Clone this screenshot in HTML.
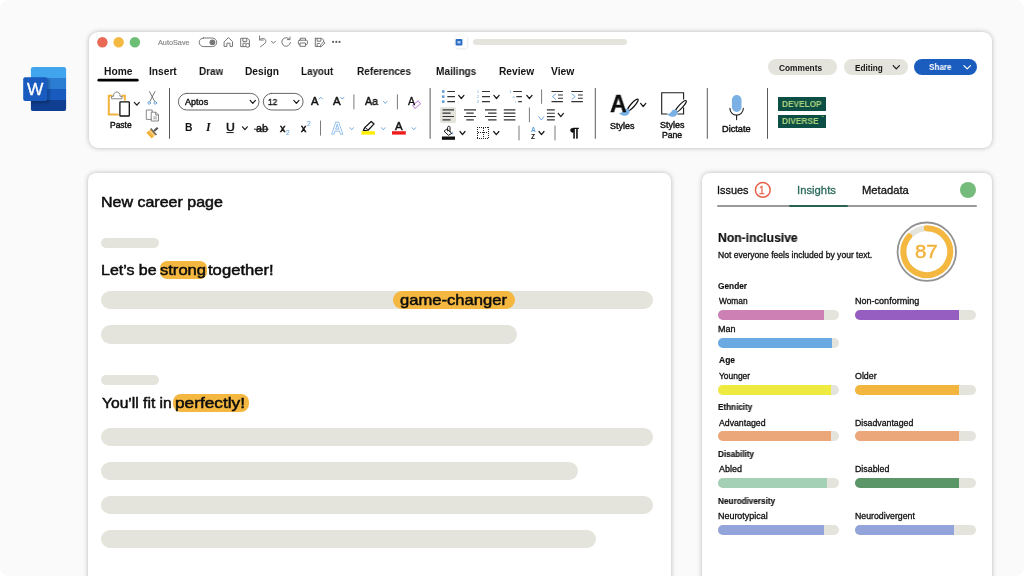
<!DOCTYPE html>
<html lang="en"><head><meta charset="utf-8"><title>Word add-in – Develop Diverse</title>
<style>
html,body{margin:0;padding:0;background:#fff;}
body{width:1024px;height:576px;overflow:hidden;position:relative;font-family:"Liberation Sans",sans-serif;}
#bg{position:absolute;left:0;top:0;width:1024px;height:576px;background:#fafafa;border-radius:9px;overflow:hidden;}
.card{position:absolute;background:#fff;box-shadow:0 0 5px rgba(0,0,0,.27);}
#toolbar{left:88.5px;top:31.5px;width:903.7px;height:116px;border-radius:9px;}
#doc{left:88px;top:172.9px;width:582.8px;height:420px;border-radius:8px;}
#panel{left:702.2px;top:172.9px;width:289.8px;height:420px;border-radius:8px;}
.t{position:absolute;white-space:nowrap;line-height:1;transform-origin:0 50%;will-change:transform;}
.ph{position:absolute;background:#e4e4dc;border-radius:10px;}
.hl{position:absolute;background:#f4b840;}
.bar{position:absolute;width:121px;height:10px;border-radius:5px;background:#e4e4dc;overflow:hidden;}
.bar i{display:block;height:100%;}
.pill{position:absolute;border-radius:9px;background:#e4e4dc;}
svg#ic{position:absolute;left:0;top:0;will-change:transform;}
</style></head><body>
<div id="bg">
<div class="card" id="toolbar"></div>
<div class="card" id="doc"></div>
<div class="card" id="panel"></div>

<!-- toolbar buttons -->
<div class="pill" style="left:767.5px;top:59px;width:69.4px;height:16.3px"></div>
<div class="pill" style="left:843.8px;top:58.8px;width:63.8px;height:16.4px"></div>
<div class="pill" style="left:913.7px;top:58.7px;width:63.7px;height:16.5px;background:#1b5cbf"></div>
<div class="pill" style="left:473px;top:39px;width:154.3px;height:6.1px;border-radius:3px"></div>
<div style="position:absolute;left:440.3px;top:106.6px;width:16.2px;height:16.2px;border-radius:2px;background:#e4e4dc"></div>
<div style="position:absolute;left:778.1px;top:97.1px;width:48.4px;height:13.8px;background:#0e4f45"></div>
<div style="position:absolute;left:778.1px;top:114.7px;width:48.4px;height:13.7px;background:#0e4f45"></div>

<!-- document placeholders / highlights -->
<div class="ph" style="left:101px;top:238.4px;width:58px;height:9.6px"></div>
<div class="ph" style="left:101px;top:291.1px;width:551.5px;height:18.2px"></div>
<div class="ph" style="left:101px;top:325.4px;width:416px;height:18.2px"></div>
<div class="ph" style="left:101px;top:375.2px;width:58px;height:9.5px"></div>
<div class="ph" style="left:101px;top:427.8px;width:551.5px;height:18.2px"></div>
<div class="ph" style="left:101px;top:461.9px;width:476.5px;height:18.2px"></div>
<div class="ph" style="left:101px;top:496.0px;width:551.5px;height:18.2px"></div>
<div class="ph" style="left:101px;top:530.0px;width:495.4px;height:18.3px"></div>

<div class="hl" style="left:159.5px;top:260.6px;width:47.5px;height:18px;border-radius:7px"></div>
<div class="hl" style="left:393.2px;top:291.1px;width:121.6px;height:18.2px;border-radius:9px"></div>
<div class="hl" style="left:173px;top:393.5px;width:76.2px;height:18.5px;border-radius:8px"></div>

<!-- panel bars -->
<div style="position:absolute;left:717.2px;top:205.3px;width:260px;height:2px;background:#9a9a9a;border-radius:1px"></div>
<div style="position:absolute;left:789.4px;top:205.2px;width:58.7px;height:2.3px;background:#2a6354;border-radius:1px"></div>
<div style="position:absolute;left:959.7px;top:181.5px;width:16.2px;height:16.2px;border-radius:50%;background:#74bb7c"></div>
<div class="bar" style="left:718.2px;top:310.0px"><i style="width:106.3px;background:#cc80b4"></i></div>
<div class="bar" style="left:854.8px;top:310.0px"><i style="width:103.9px;background:#965ec1"></i></div>
<div class="bar" style="left:718.2px;top:337.9px"><i style="width:113.6px;background:#6aa9e2"></i></div>
<div class="bar" style="left:718.2px;top:384.7px"><i style="width:112.8px;background:#eeea3f"></i></div>
<div class="bar" style="left:854.8px;top:384.7px"><i style="width:103.9px;background:#f2b63f"></i></div>
<div class="bar" style="left:718.2px;top:431.4px"><i style="width:112.8px;background:#eba67a"></i></div>
<div class="bar" style="left:854.8px;top:431.4px"><i style="width:103.9px;background:#eba67a"></i></div>
<div class="bar" style="left:718.2px;top:478.2px"><i style="width:108.4px;background:#a4d0b5"></i></div>
<div class="bar" style="left:854.8px;top:478.2px"><i style="width:103.9px;background:#5a9668"></i></div>
<div class="bar" style="left:718.2px;top:525.0px"><i style="width:106.3px;background:#92a4d9"></i></div>
<div class="bar" style="left:854.8px;top:525.0px"><i style="width:98.9px;background:#92a4d9"></i></div>

<svg id="ic" width="1024" height="576" viewBox="0 0 1024 576" fill="none" stroke-linecap="round" stroke-linejoin="round" font-family="Liberation Sans, sans-serif">
<defs>
<clipPath id="wclip"><rect x="30.9" y="67" width="35.2" height="44.1" rx="2.2"/></clipPath>
<filter id="sh" x="-30%" y="-30%" width="160%" height="160%"><feGaussianBlur stdDeviation="1.1"/></filter>
</defs>
<!-- Word logo -->
<g clip-path="url(#wclip)" stroke="none">
<rect x="30" y="66" width="37" height="12.1" fill="#41a5ee"/>
<rect x="30" y="78" width="37" height="11.1" fill="#2b7cd3"/>
<rect x="30" y="89" width="37" height="11.1" fill="#185abd"/>
<rect x="30" y="100" width="37" height="12" fill="#103f91"/>
<rect x="24" y="78.6" width="25.5" height="24.6" rx="2" fill="#000" opacity=".22" filter="url(#sh)"/>
</g>
<rect x="23.2" y="77.3" width="24" height="23.6" rx="2" fill="#185abd" stroke="none"/>
<text x="27.1" y="95.2" font-size="17.2" fill="#fff" stroke="#fff" stroke-width="0.35" textLength="16.4" lengthAdjust="spacingAndGlyphs">W</text>

<!-- traffic lights -->
<g stroke="none">
<circle cx="102.4" cy="42.25" r="5.2" fill="#e96a55"/>
<circle cx="118.65" cy="42.25" r="5.2" fill="#f4b940"/>
<circle cx="134.9" cy="42.25" r="5.2" fill="#6cbf75"/>
</g>

<!-- title bar icons -->
<g stroke="#707070" stroke-width="0.95">
<rect x="199.2" y="38" width="17.5" height="8.6" rx="4.3" fill="#fff"/>
<circle cx="212.4" cy="42.3" r="2.9" fill="#767676" stroke="none"/>
<!-- home -->
<path d="M224.4 41.6 L228.45 37.5 L232.5 41.6 V46.4 H230 V43.2 H226.9 V46.4 H224.4 Z"/>
<!-- save -->
<path d="M241.1 38.3 H247.6 L249.4 40.1 V46.6 H241.1 Z"/>
<path d="M242.9 38.5 V41.4 H246.8 V38.5"/>
<path d="M243 46.4 V43.2 H246"/>
<circle cx="247.7" cy="45.3" r="1.9" fill="#fff"/>
<!-- undo -->
<path d="M259.6 36 V40 H263.3"/>
<path d="M259.8 39.8 C262.2 37.2 266 38.3 265.8 41.4 C265.6 43.6 263.4 44.6 260.6 46.7"/>
<path d="M271.5 41.2 L273.45 43.3 L275.4 41.2"/>
<!-- redo -->
<path d="M289.6 39.4 A4.3 4.3 0 1 0 290.4 42.6"/>
<path d="M287.4 39.6 H290 V37"/>
<!-- print -->
<path d="M300.3 40.2 V38.2 H305.5 V40.2"/>
<rect x="298.4" y="40.2" width="9" height="4.4" rx="1"/>
<rect x="300.3" y="43" width="5.2" height="3.3" fill="#fff"/>
<!-- save as -->
<path d="M315.3 38.3 H321.8 L323.6 40.1 V42.5 M319.5 46.5 H315.3 V38.3"/>
<path d="M317.1 38.5 V41.2 H320.9 V38.5"/>
<path d="M317.2 46.4 V43.4 H319.5"/>
<path d="M320.2 46.6 L320.8 44.6 L323.8 41.7 L325 42.9 L322.1 45.9 Z" fill="#fff"/>
</g>
<g fill="#5c5c5c" stroke="none">
<circle cx="333.1" cy="41.9" r="1.05"/><circle cx="336.3" cy="41.9" r="1.05"/><circle cx="339.5" cy="41.9" r="1.05"/>
</g>
<!-- doc icon -->
<rect x="455.6" y="36" width="11.6" height="12.6" rx="2.6" fill="#000" opacity=".16" stroke="none" filter="url(#sh)"/>
<rect x="455.3" y="35.4" width="11.8" height="12.9" rx="2.6" fill="#fff" stroke="none"/>
<rect x="455.6" y="39" width="6.8" height="6.5" rx="1.1" fill="#2b6cc4" stroke="none"/>
<rect x="457.4" y="41" width="3.2" height="2.4" rx=".4" fill="#a9c8f0" stroke="none"/>

<!-- Home tab underline -->
<path d="M98.8 80.2 H137.3" stroke="#000" stroke-width="2.7"/>

<!-- separators -->
<g stroke="#5a5a5a" stroke-width="1" stroke-linecap="butt">
<path d="M169.5 88 V138.8 M430.1 88 V138.8 M595.3 88 V138.8 M707.3 88 V138.8 M767.5 88 V138.8"/>
</g>
<g stroke="#7a7a7a" stroke-width="1" stroke-linecap="butt">
<path d="M353.9 94.4 V109.4 M397.4 94.4 V109.4 M320.5 120.6 V135.6"/>
<path d="M541.6 89.4 V103.8 M529.4 107.5 V122.3 M519 125.6 V140.4 M555 125.6 V140.4"/>
</g>

<!-- Paste -->
<path d="M112.5 95.8 H108.8 V114.5 H118.6 M121.5 95.8 H124.8 V100.4" stroke="#f2b33d" stroke-width="2" stroke-linecap="butt" stroke-linejoin="miter"/>
<path d="M111.6 98.4 V96.3 H113.6 C113.2 93.6 115 92 116.8 92 C118.6 92 120.3 93.6 120 96.3 H122 V98.4 Z" stroke="#7a7a7a" stroke-width="0.9" fill="#fff"/>
<rect x="119.9" y="101.9" width="9.4" height="14.1" rx=".6" stroke="#111" stroke-width="1.3" fill="#fff"/>
<path d="M134.3 102.4 L136.8 105.2 L139.3 102.4" stroke="#1c1c1c" stroke-width="1.2"/>
<!-- scissors -->
<path d="M149.6 91.6 L154.6 101.4 M154.9 91.6 L149.9 101.4" stroke="#666" stroke-width="0.9"/>
<circle cx="149.2" cy="102.9" r="1.3" stroke="#5b9bd5" stroke-width="0.9"/>
<circle cx="155.3" cy="102.9" r="1.3" stroke="#5b9bd5" stroke-width="0.9"/>
<!-- copy -->
<g stroke="#7a7a7a" stroke-width="0.9">
<path d="M151.4 119.4 H146.3 V110 H152.2 V111.8"/>
<path d="M151.6 112.2 H155.8 L158.5 114.9 V121 H151.6 Z" fill="#fff"/>
<path d="M155.7 112.4 V115 H158.3"/>
<path d="M153.6 117 H156.6 M153.6 118.8 H156.6" stroke-width="0.7"/>
</g>
<!-- format painter -->
<path d="M146.3 132.7 L150.8 129 L155.8 134.5 L151.7 138.4 Z" fill="#f2b33d" stroke="none"/>
<path d="M149.3 130.4 L154.5 136.1" stroke="#fff" stroke-width="0.7"/>
<path d="M150.7 128.6 L156.5 134.9" stroke="#666" stroke-width="1.5" stroke-linecap="butt"/>
<path d="M154.1 131 L157.7 127.7" stroke="#555" stroke-width="2.1" stroke-linecap="butt"/>

<!-- font boxes -->
<rect x="178.4" y="93.4" width="80.6" height="16.6" rx="8.3" stroke="#555" stroke-width="0.9" fill="#fff"/>
<rect x="263.3" y="93.4" width="39.8" height="16.6" rx="8.3" stroke="#555" stroke-width="0.9" fill="#fff"/>
<g stroke="#1c1c1c" stroke-width="1.2">
<path d="M250.2 100.4 L252.8 103.4 L255.4 100.4"/>
<path d="M293.8 100.4 L296.4 103.4 L299 100.4"/>
<path d="M242.5 126.8 L244.9 129.6 L247.3 126.8"/>
</g>
<g stroke="#72aae0" stroke-width="1.0">
<path d="M319.1 99 L320.8 97.2 L322.5 99"/>
<path d="M340.6 97.3 L342.3 99.1 L344 97.3"/>
<path d="M383.5 101.4 L385.3 103.5 L387.1 101.4"/>
<path d="M350 127.7 L351.7 129.8 L353.4 127.7"/>
<path d="M381.6 127.7 L383.3 129.8 L385 127.7"/>
<path d="M412 127.7 L413.8 129.8 L415.6 127.7"/>
</g>
<!-- eraser -->
<rect x="-3.6" y="-1.9" width="7.2" height="3.8" transform="translate(416.6 104.6) rotate(-40)" stroke="#c48bd6" stroke-width="0.95" fill="#fff"/>
<!-- U underline, ab strike -->
<path d="M226.4 132.6 H233.7" stroke="#161616" stroke-width="1" stroke-linecap="butt"/>
<path d="M254 129.2 H268.6" stroke="#111" stroke-width="0.9" stroke-linecap="butt"/>
<!-- outline A -->
<text x="331.2" y="133.7" font-size="16.6" font-weight="bold" fill="#fff" stroke="#7ab0e4" stroke-width="0.75" textLength="12" lengthAdjust="spacingAndGlyphs">A</text>
<!-- highlighter -->
<path d="M363.3 130.4 L365 127.4 L371.2 121.5 L374.1 123.9 L368.3 130 L365.3 130.6 Z" stroke="#111" stroke-width="1.25" fill="#fff"/>
<path d="M365 127.4 L368.3 130" stroke="#1c1c1c" stroke-width="0.9"/>
<rect x="361.4" y="131.2" width="13.5" height="3.4" fill="#ffee00" stroke="none"/>
<rect x="392" y="131.2" width="13.8" height="3.4" fill="#ee1c1c" stroke="none"/>

<!-- paragraph row 1 -->
<g stroke="#333" stroke-width="1.15" stroke-linecap="butt">
<path d="M447.3 91.5 H455 M447.3 96.6 H455 M447.3 101.6 H455"/>
<path d="M482 91.5 H490 M482 96.6 H490 M482 101.6 H490"/>
<path d="M513.2 91.5 H521.9 M516.3 96.6 H521.9 M518.2 101.6 H521.9"/>
<path d="M551.5 91.5 H562.9 M558 95 H562.9 M558 98.2 H562.9 M551.5 101.6 H562.9"/>
<path d="M571.3 91.5 H582.8 M578 95 H582.8 M578 98.2 H582.8 M571.3 101.6 H582.8"/>
<!-- row 2 -->
<path d="M442.5 109.8 H454 M442.5 113.1 H450.6 M442.5 116.5 H454 M442.5 119.8 H450.6"/>
<path d="M464 109.8 H476 M466.3 113.1 H473.7 M464 116.5 H476 M466.3 119.8 H473.7"/>
<path d="M485 109.8 H496.5 M488.1 113.1 H496.5 M485 116.5 H496.5 M488.1 119.8 H496.5"/>
<path d="M503.8 109.8 H515.4 M503.8 113.1 H515.4 M503.8 116.5 H515.4 M503.8 119.8 H515.4"/>
<path d="M546.9 109.9 H554.8 M546.9 113.2 H554.8 M546.9 116.6 H554.8 M546.9 119.9 H554.8"/>
</g>
<g fill="#5b9bd5" stroke="none">
<rect x="442" y="90.3" width="2.5" height="2.5"/><rect x="442" y="95.4" width="2.5" height="2.5"/><rect x="442" y="100.4" width="2.5" height="2.5"/>
</g>
<g fill="#7ab0e4" stroke="none" font-size="4.2">
<text x="476.8" y="93">1</text><text x="476.8" y="98.1">2</text><text x="476.8" y="103.1">3</text>
<text x="509.6" y="93">1</text><text x="512.4" y="98">a</text><text x="515.2" y="103.2">i</text>
</g>
<g stroke="#1c1c1c" stroke-width="1.25">
<path d="M458.7 95.3 L461.3 98.5 L463.9 95.3"/>
<path d="M493.9 95.3 L496.5 98.5 L499.1 95.3"/>
<path d="M526.8 95.3 L529.4 98.5 L532 95.3"/>
<path d="M558.2 113.4 L560.8 116.6 L563.4 113.4"/>
<path d="M460 131.5 L462.5 134.7 L465 131.5"/>
<path d="M493.7 131.5 L496.3 134.7 L498.9 131.5"/>
<path d="M539 131.5 L541.5 134.7 L544 131.5"/>
<path d="M640.6 103.3 L643.2 106.5 L645.8 103.3"/>
</g>
<g stroke="#6aa5de" stroke-width="0.95">
<path d="M555.6 94 L552.4 96.6 L555.6 99.2"/>
<path d="M572 94 L575.2 96.6 L572 99.2"/>
<path d="M538.8 116.7 L541.3 120 L543.8 116.7"/>
</g>
<!-- paint bucket -->
<path d="M447.2 129.3 L451.8 133.4 L448.4 135.3 L444.3 131.4 Z" stroke="#1c1c1c" stroke-width="1" fill="#fff"/>
<path d="M447.6 131 V127.4 C447.6 125.8 450 125.8 450 127.4 V131.6" stroke="#1c1c1c" stroke-width="1"/>
<path d="M452.6 131.5 C453.6 133 453.6 134.2 452.6 134.2 C451.6 134.2 451.8 133 452.6 131.5 Z" fill="#7ab0e4" stroke="none"/>
<rect x="441.9" y="136.5" width="13.1" height="3.3" fill="#111" stroke="none"/>
<!-- borders -->
<g stroke="#222" stroke-width="1" stroke-dasharray="1 1" stroke-linecap="butt" shape-rendering="crispEdges">
<path d="M477 127 H489 M477 138 H489 M477.5 127 V139 M488.5 127 V139"/>
<path d="M483 128 V138 M478 132.5 H488"/>
</g>

<!-- Styles brush -->
<ellipse cx="0" cy="0" rx="7.7" ry="1.9" transform="translate(632.8 105) rotate(-48)" stroke="#111" stroke-width="1.2" fill="#fff"/>
<path d="M618.8 112.8 C621.5 113.4 623 111 624.2 109.4 C625.6 107.8 628.6 108.6 629.4 110.4 C630.4 112.8 628 115.8 624.4 115.7 C621.8 115.6 619.8 114.4 618.8 112.8 Z" fill="#7ab0e4" stroke="none"/>
<!-- Styles Pane -->
<path d="M683.6 99.5 V92.7 H661.7 V114 H667.5 M677.5 114 H683.6 V107.5" stroke="#1c1c1c" stroke-width="1.1" stroke-linejoin="miter" stroke-linecap="butt"/>
<ellipse cx="0" cy="0" rx="7.8" ry="1.9" transform="translate(680.8 106.4) rotate(-47)" stroke="#111" stroke-width="1.2" fill="#fff"/>
<path d="M666.8 113.8 C669.5 114.4 671 112 672.2 110.4 C673.6 108.8 676.6 109.6 677.4 111.4 C678.4 113.8 676 116.8 672.4 116.7 C669.8 116.6 667.8 115.4 666.8 113.8 Z" fill="#7ab0e4" stroke="none"/>
<!-- Mic -->
<rect x="731.9" y="95" width="9.6" height="16.9" rx="4.8" fill="#7ab0e4" stroke="none"/>
<path d="M729.9 108.2 C729.9 117.4 743.3 117.4 743.3 108.2 M736.6 115.2 V119.6" stroke="#1c1c1c" stroke-width="1.1"/>

<!-- button chevrons -->
<path d="M893.2 65.6 L896.3 68.8 L899.4 65.6" stroke="#161616" stroke-width="1.2"/>
<path d="M963.9 65.6 L967.2 68.9 L970.5 65.6" stroke="#fff" stroke-width="1.2"/>

<!-- panel -->
<circle cx="762.8" cy="189.9" r="7.4" stroke="#e8614a" stroke-width="1.5"/>
<circle cx="926.8" cy="251.7" r="29.2" stroke="#929292" stroke-width="1.8"/>
<circle cx="926.8" cy="251.7" r="23.4" stroke="#e4e4dc" stroke-width="5.8"/>
<path d="M926.8 228.3 A23.4 23.4 0 1 1 909.14 236.35" stroke="#f4b840" stroke-width="6"/>
</svg>

<div class="t" style="left:158.00px;top:39px;font-size:7px;color:#858585;transform:scaleX(1.0411);-webkit-text-stroke:0.15px #858585;">AutoSave</div>
<div class="t" style="left:104.23px;top:67px;font-size:10.2px;color:#141414;font-weight:bold;transform:scaleX(1.0060);">Home</div>
<div class="t" style="left:148.59px;top:67px;font-size:10.2px;color:#141414;font-weight:bold;transform:scaleX(0.9933);">Insert</div>
<div class="t" style="left:199.35px;top:67px;font-size:10.2px;color:#141414;font-weight:bold;transform:scaleX(0.9763);">Draw</div>
<div class="t" style="left:244.59px;top:67px;font-size:10.2px;color:#141414;font-weight:bold;transform:scaleX(0.9926);">Design</div>
<div class="t" style="left:301.16px;top:67px;font-size:10.2px;color:#141414;font-weight:bold;transform:scaleX(0.9636);">Layout</div>
<div class="t" style="left:357.45px;top:67px;font-size:10.2px;color:#141414;font-weight:bold;transform:scaleX(0.9850);">References</div>
<div class="t" style="left:436.15px;top:67px;font-size:10.2px;color:#141414;font-weight:bold;transform:scaleX(0.9879);">Mailings</div>
<div class="t" style="left:499.04px;top:67px;font-size:10.2px;color:#141414;font-weight:bold;transform:scaleX(0.9934);">Review</div>
<div class="t" style="left:550.55px;top:67px;font-size:10.2px;color:#141414;font-weight:bold;transform:scaleX(1.0151);">View</div>
<div class="t" style="left:109.82px;top:122px;font-size:8.2px;color:#111;transform:scaleX(1.0317);-webkit-text-stroke:0.4px #111;">Paste</div>
<div class="t" style="left:184.90px;top:98px;font-size:8.8px;color:#111;transform:scaleX(1.0304);-webkit-text-stroke:0.4px #111;">Aptos</div>
<div class="t" style="left:267.69px;top:98px;font-size:8.8px;color:#111;transform:scaleX(0.9298);-webkit-text-stroke:0.4px #111;">12</div>
<div class="t" style="left:311.30px;top:96px;font-size:10.8px;color:#111;transform:scaleX(1.0443);-webkit-text-stroke:0.45px #111;">A</div>
<div class="t" style="left:332.70px;top:96px;font-size:10.8px;color:#111;transform:scaleX(1.0582);-webkit-text-stroke:0.45px #111;">A</div>
<div class="t" style="left:364.90px;top:96px;font-size:10.8px;color:#111;transform:scaleX(0.9751);-webkit-text-stroke:0.45px #111;">Aa</div>
<div class="t" style="left:408.00px;top:97px;font-size:10.2px;color:#111;transform:scaleX(1.0320);-webkit-text-stroke:0.3px #111;">A</div>
<div class="t" style="left:184.84px;top:123px;font-size:10.3px;color:#111;font-weight:bold;transform:scaleX(0.9788);">B</div>
<div class="t" style="left:206.3px;top:120.6px;font-size:12px;font-family:'Liberation Serif',serif;font-style:italic;font-weight:bold;color:#111">I</div>
<div class="t" style="left:225.58px;top:123px;font-size:10.3px;color:#111;transform:scaleX(1.1923);-webkit-text-stroke:0.45px #111;">U</div>
<div class="t" style="left:255.57px;top:124px;font-size:10.3px;color:#111;transform:scaleX(1.0369);-webkit-text-stroke:0.35px #111;">ab</div>
<div class="t" style="left:279.79px;top:124px;font-size:10.3px;color:#111;transform:scaleX(1.0518);-webkit-text-stroke:0.5px #111;">x</div>
<div class="t" style="left:285.97px;top:130px;font-size:6.6px;color:#76ade2;-webkit-text-stroke:0.1px #76ade2;">2</div>
<div class="t" style="left:301.09px;top:124px;font-size:10.3px;color:#111;transform:scaleX(1.0316);-webkit-text-stroke:0.5px #111;">x</div>
<div class="t" style="left:306.57px;top:121px;font-size:6.6px;color:#76ade2;-webkit-text-stroke:0.1px #76ade2;">2</div>
<div class="t" style="left:395.30px;top:122px;font-size:10.4px;color:#111;transform:scaleX(1.0989);-webkit-text-stroke:0.45px #111;">A</div>
<div class="t" style="left:530.74px;top:127px;font-size:6.6px;color:#62a0dc;font-weight:bold;">A</div>
<div class="t" style="left:531.13px;top:134px;font-size:6.6px;color:#111;font-weight:bold;">Z</div>
<div class="t" style="left:570.11px;top:126px;font-size:13.5px;color:#111;font-weight:bold;transform:scaleX(1.2196);-webkit-text-stroke:0.4px #111;">¶</div>
<div class="t" style="left:610.22px;top:92px;font-size:24.6px;color:#0c0c0c;font-weight:bold;transform:scaleX(0.9455);-webkit-text-stroke:0.3px #0c0c0c;">A</div>
<div class="t" style="left:610.20px;top:122px;font-size:8.6px;color:#111;transform:scaleX(1.0463);-webkit-text-stroke:0.4px #111;">Styles</div>
<div class="t" style="left:660.20px;top:121px;font-size:8.6px;color:#111;transform:scaleX(1.0463);-webkit-text-stroke:0.4px #111;">Styles</div>
<div class="t" style="left:662.41px;top:131px;font-size:8.6px;color:#111;transform:scaleX(1.0053);-webkit-text-stroke:0.4px #111;">Pane</div>
<div class="t" style="left:722.36px;top:125px;font-size:8.6px;color:#111;transform:scaleX(1.0695);-webkit-text-stroke:0.4px #111;">Dictate</div>
<div class="t" style="left:779.42px;top:65px;font-size:8.2px;color:#161616;font-weight:bold;transform:scaleX(1.0183);">Comments</div>
<div class="t" style="left:855.26px;top:65px;font-size:8.2px;color:#161616;font-weight:bold;transform:scaleX(1.0041);">Editing</div>
<div class="t" style="left:929.20px;top:63px;font-size:8.4px;color:#ffffff;font-weight:bold;transform:scaleX(0.9699);">Share</div>
<div class="t" style="left:782.21px;top:100px;font-size:8.6px;color:#a9d27c;font-weight:bold;transform:scaleX(0.9628);">DEVELOP</div>
<div class="t" style="left:782.36px;top:117px;font-size:8.6px;color:#a9d27c;font-weight:bold;transform:scaleX(0.9717);">DIVERSE</div>
<div class="t" style="left:820.68px;top:116px;font-size:3.5px;color:#a9d27c;">™</div>
<div class="t" style="left:101.02px;top:195px;font-size:14.6px;color:#0d0d0d;transform:scaleX(1.0966);-webkit-text-stroke:0.5px #0d0d0d;">New career page</div>
<div class="t" style="left:101.02px;top:262px;font-size:15.0px;color:#0d0d0d;transform:scaleX(1.0639);-webkit-text-stroke:0.5px #0d0d0d;">Let’s be</div>
<div class="t" style="left:160.39px;top:262px;font-size:15.0px;color:#0d0d0d;transform:scaleX(1.1033);-webkit-text-stroke:0.5px #0d0d0d;">strong</div>
<div class="t" style="left:208.45px;top:262px;font-size:15.0px;color:#0d0d0d;transform:scaleX(1.1097);-webkit-text-stroke:0.5px #0d0d0d;">together!</div>
<div class="t" style="left:399.84px;top:292px;font-size:15.0px;color:#0d0d0d;transform:scaleX(1.1061);-webkit-text-stroke:0.5px #0d0d0d;">game-changer</div>
<div class="t" style="left:102.44px;top:395px;font-size:15.0px;color:#0d0d0d;transform:scaleX(1.0407);-webkit-text-stroke:0.5px #0d0d0d;">You’ll fit in</div>
<div class="t" style="left:174.86px;top:395px;font-size:15.0px;color:#0d0d0d;transform:scaleX(1.1509);-webkit-text-stroke:0.5px #0d0d0d;">perfectly!</div>
<div class="t" style="left:717.02px;top:185px;font-size:10.8px;color:#111;transform:scaleX(1.0080);-webkit-text-stroke:0.3px #111;">Issues</div>
<div class="t" style="left:759.48px;top:186px;font-size:10.0px;color:#e8614a;transform:scaleX(0.9655);-webkit-text-stroke:0.3px #e8614a;">1</div>
<div class="t" style="left:796.68px;top:185px;font-size:10.8px;color:#2d6b5c;transform:scaleX(1.0459);-webkit-text-stroke:0.3px #2d6b5c;">Insights</div>
<div class="t" style="left:861.80px;top:185px;font-size:10.8px;color:#111;transform:scaleX(1.0412);-webkit-text-stroke:0.3px #111;">Metadata</div>
<div class="t" style="left:717.96px;top:232px;font-size:12.4px;color:#0d0d0d;font-weight:bold;transform:scaleX(0.9806);-webkit-text-stroke:0.15px #0d0d0d;">Non-inclusive</div>
<div class="t" style="left:718.07px;top:252px;font-size:8.2px;color:#111;transform:scaleX(1.0427);-webkit-text-stroke:0.3px #111;">Not everyone feels included by your text.</div>
<div class="t" style="left:915.48px;top:242px;font-size:19.0px;color:#f2b33d;transform:scaleX(1.0732);-webkit-text-stroke:0.5px #f2b33d;">87</div>
<div class="t" style="left:718.42px;top:282px;font-size:8.3px;color:#111;font-weight:bold;transform:scaleX(0.9985);-webkit-text-stroke:0.15px #111;">Gender</div>
<div class="t" style="left:718.79px;top:356px;font-size:8.3px;color:#111;font-weight:bold;transform:scaleX(1.0243);-webkit-text-stroke:0.15px #111;">Age</div>
<div class="t" style="left:718.47px;top:403px;font-size:8.3px;color:#111;font-weight:bold;transform:scaleX(0.9772);-webkit-text-stroke:0.15px #111;">Ethnicity</div>
<div class="t" style="left:718.47px;top:450px;font-size:8.3px;color:#111;font-weight:bold;transform:scaleX(0.9765);-webkit-text-stroke:0.15px #111;">Disability</div>
<div class="t" style="left:718.47px;top:497px;font-size:8.3px;color:#111;font-weight:bold;transform:scaleX(0.9833);-webkit-text-stroke:0.15px #111;">Neurodiversity</div>
<div class="t" style="left:718.80px;top:297px;font-size:8.3px;color:#111;transform:scaleX(1.0061);-webkit-text-stroke:0.3px #111;">Woman</div>
<div class="t" style="left:854.58px;top:297px;font-size:8.3px;color:#111;transform:scaleX(1.0882);-webkit-text-stroke:0.3px #111;">Non-conforming</div>
<div class="t" style="left:718.28px;top:325px;font-size:8.3px;color:#111;transform:scaleX(1.0813);-webkit-text-stroke:0.3px #111;">Man</div>
<div class="t" style="left:718.83px;top:372px;font-size:8.3px;color:#111;transform:scaleX(1.0153);-webkit-text-stroke:0.3px #111;">Younger</div>
<div class="t" style="left:854.90px;top:372px;font-size:8.3px;color:#111;transform:scaleX(1.0659);-webkit-text-stroke:0.3px #111;">Older</div>
<div class="t" style="left:719.00px;top:419px;font-size:8.3px;color:#111;transform:scaleX(1.0506);-webkit-text-stroke:0.3px #111;">Advantaged</div>
<div class="t" style="left:854.60px;top:419px;font-size:8.3px;color:#111;transform:scaleX(1.0535);-webkit-text-stroke:0.3px #111;">Disadvantaged</div>
<div class="t" style="left:719.00px;top:465px;font-size:8.3px;color:#111;transform:scaleX(1.0769);-webkit-text-stroke:0.3px #111;">Abled</div>
<div class="t" style="left:854.59px;top:465px;font-size:8.3px;color:#111;transform:scaleX(1.0635);-webkit-text-stroke:0.3px #111;">Disabled</div>
<div class="t" style="left:718.28px;top:512px;font-size:8.3px;color:#111;transform:scaleX(1.0769);-webkit-text-stroke:0.3px #111;">Neurotypical</div>
<div class="t" style="left:854.60px;top:512px;font-size:8.3px;color:#111;transform:scaleX(1.0559);-webkit-text-stroke:0.3px #111;">Neurodivergent</div>

</div>
</body></html>
